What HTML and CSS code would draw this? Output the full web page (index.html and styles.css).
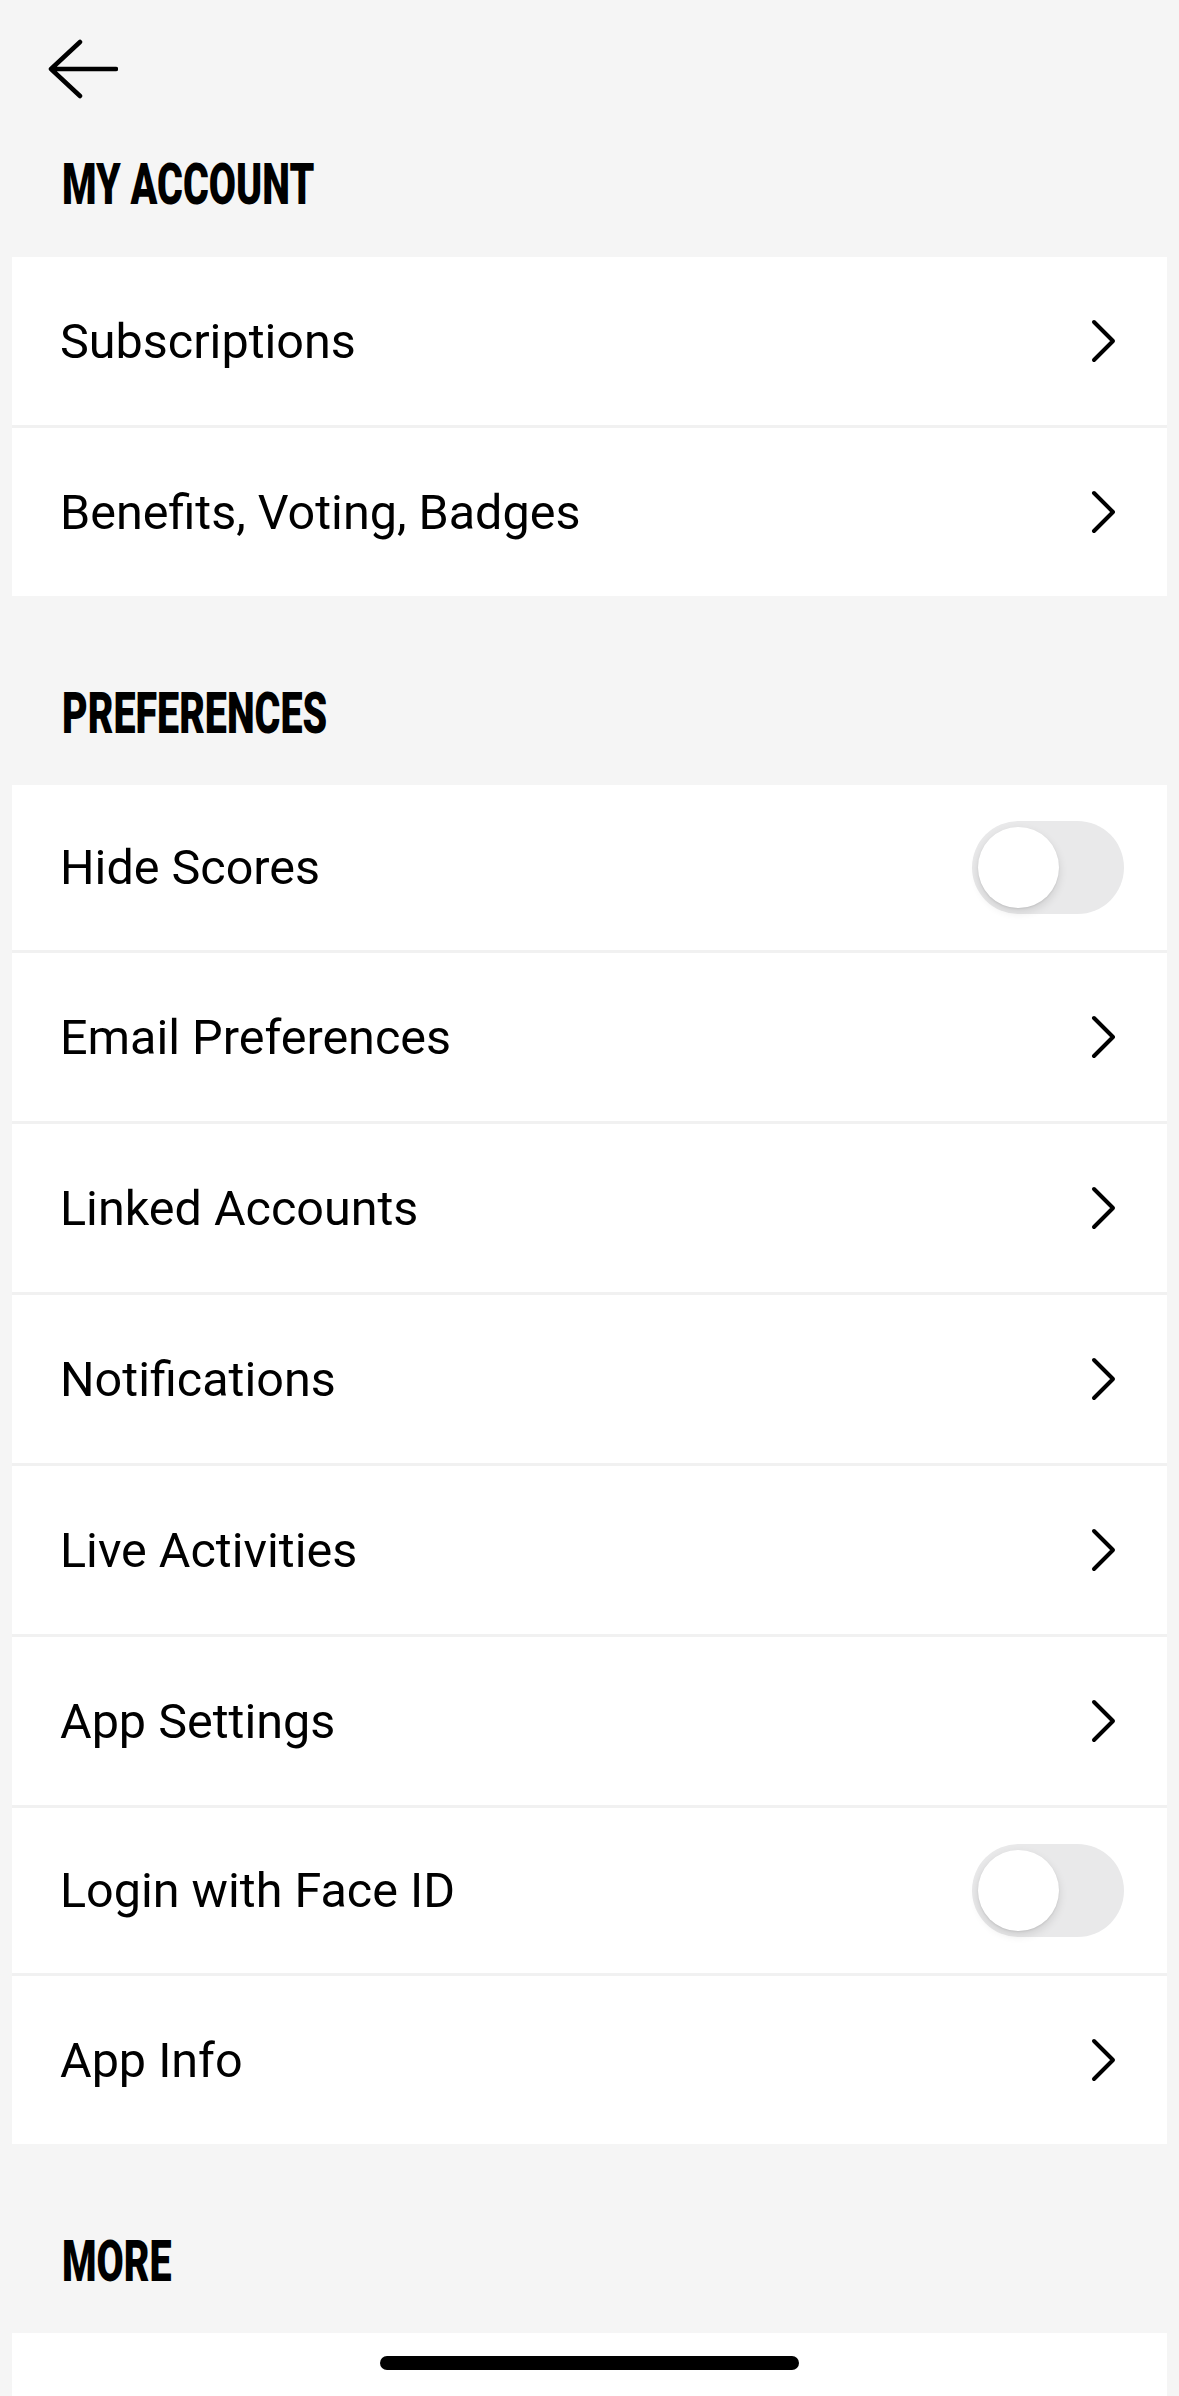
FILE: index.html
```html
<!DOCTYPE html>
<html lang="en">
<head>
    <meta charset="UTF-8">
    <meta name="viewport" content="width=device-width, initial-scale=1.0">
    <title>Settings</title>
    <link rel="stylesheet" href="styles.css">
</head>
<body>
    <div class="topbar">
        <svg class="back" width="70" height="60" viewBox="0 0 70 60">
            <path d="M32 3 L3 30 L32 57 M3 30 L68 30" fill="none" stroke="#000" stroke-width="4.5" stroke-linecap="round" stroke-linejoin="round"/>
        </svg>
    </div>

    <h2 class="section-title first"><span>MY ACCOUNT</span></h2>
    <div class="card">
        <div class="row"><span class="label">Subscriptions</span><svg class="chev" width="26" height="46" viewBox="0 0 26 46"><path d="M3 4 L22 23 L3 42" fill="none" stroke="#000" stroke-width="4" stroke-linecap="round" stroke-linejoin="round"/></svg></div>
        <div class="row"><span class="label">Benefits, Voting, Badges</span><svg class="chev" width="26" height="46" viewBox="0 0 26 46"><path d="M3 4 L22 23 L3 42" fill="none" stroke="#000" stroke-width="4" stroke-linecap="round" stroke-linejoin="round"/></svg></div>
    </div>

    <h2 class="section-title"><span>PREFERENCES</span></h2>
    <div class="card">
        <div class="row toggle-row"><span class="label">Hide Scores</span><div class="toggle"><div class="knob"></div></div></div>
        <div class="row"><span class="label">Email Preferences</span><svg class="chev" width="26" height="46" viewBox="0 0 26 46"><path d="M3 4 L22 23 L3 42" fill="none" stroke="#000" stroke-width="4" stroke-linecap="round" stroke-linejoin="round"/></svg></div>
        <div class="row"><span class="label">Linked Accounts</span><svg class="chev" width="26" height="46" viewBox="0 0 26 46"><path d="M3 4 L22 23 L3 42" fill="none" stroke="#000" stroke-width="4" stroke-linecap="round" stroke-linejoin="round"/></svg></div>
        <div class="row"><span class="label">Notifications</span><svg class="chev" width="26" height="46" viewBox="0 0 26 46"><path d="M3 4 L22 23 L3 42" fill="none" stroke="#000" stroke-width="4" stroke-linecap="round" stroke-linejoin="round"/></svg></div>
        <div class="row"><span class="label">Live Activities</span><svg class="chev" width="26" height="46" viewBox="0 0 26 46"><path d="M3 4 L22 23 L3 42" fill="none" stroke="#000" stroke-width="4" stroke-linecap="round" stroke-linejoin="round"/></svg></div>
        <div class="row"><span class="label">App Settings</span><svg class="chev" width="26" height="46" viewBox="0 0 26 46"><path d="M3 4 L22 23 L3 42" fill="none" stroke="#000" stroke-width="4" stroke-linecap="round" stroke-linejoin="round"/></svg></div>
        <div class="row toggle-row"><span class="label">Login with Face ID</span><div class="toggle"><div class="knob"></div></div></div>
        <div class="row"><span class="label">App Info</span><svg class="chev" width="26" height="46" viewBox="0 0 26 46"><path d="M3 4 L22 23 L3 42" fill="none" stroke="#000" stroke-width="4" stroke-linecap="round" stroke-linejoin="round"/></svg></div>
    </div>

    <h2 class="section-title"><span>MORE</span></h2>
    <div class="card">
        <div class="row"><span class="label"></span><svg class="chev" width="26" height="46" viewBox="0 0 26 46"><path d="M3 4 L22 23 L3 42" fill="none" stroke="#000" stroke-width="4" stroke-linecap="round" stroke-linejoin="round"/></svg></div>
    </div>

    <div class="home-indicator"></div>
</body>
</html>
```

FILE: styles.css
```css
body {
    margin: 0;
    padding: 0;
    background-color: #f5f5f5;
    font-family: Roboto, "Liberation Sans", sans-serif;
    color: #000;
}

.topbar {
    padding: 39px 0 0 48px;
    height: 60px;
}

.back {
    display: block;
}

.section-title {
    margin: 0;
    padding: 88px 0 43px 62px;
    font-size: 58px;
    line-height: 58px;
    font-weight: 900;
    white-space: nowrap;
}

.section-title.first {
    padding-top: 56px;
    padding-bottom: 44px;
}

.section-title span {
    display: inline-block;
    transform: scaleX(0.68);
    transform-origin: left center;
}

.card {
    margin: 0 12px;
    display: flex;
    flex-direction: column;
    gap: 3px;
    background-color: #f1f1f1;
}

.row {
    height: 168px;
    background-color: #fff;
    display: flex;
    align-items: center;
    justify-content: space-between;
    padding: 0 50px 0 48px;
    box-sizing: border-box;
}

.toggle-row {
    height: 165px;
    padding-right: 43px;
}

.label {
    font-size: 48.5px;
}

.chev {
    display: block;
}

.toggle {
    width: 152px;
    height: 93px;
    border-radius: 47px;
    background-color: #e9e9ea;
    position: relative;
}

.knob {
    position: absolute;
    left: 6px;
    top: 6px;
    width: 81px;
    height: 81px;
    border-radius: 50%;
    background-color: #fff;
    box-shadow: 0 4px 10px rgba(0, 0, 0, 0.12), 0 1px 2px rgba(0, 0, 0, 0.08);
}

.home-indicator {
    position: fixed;
    left: 380px;
    bottom: 26px;
    width: 419px;
    height: 14px;
    border-radius: 7px;
    background-color: #000;
}
```
